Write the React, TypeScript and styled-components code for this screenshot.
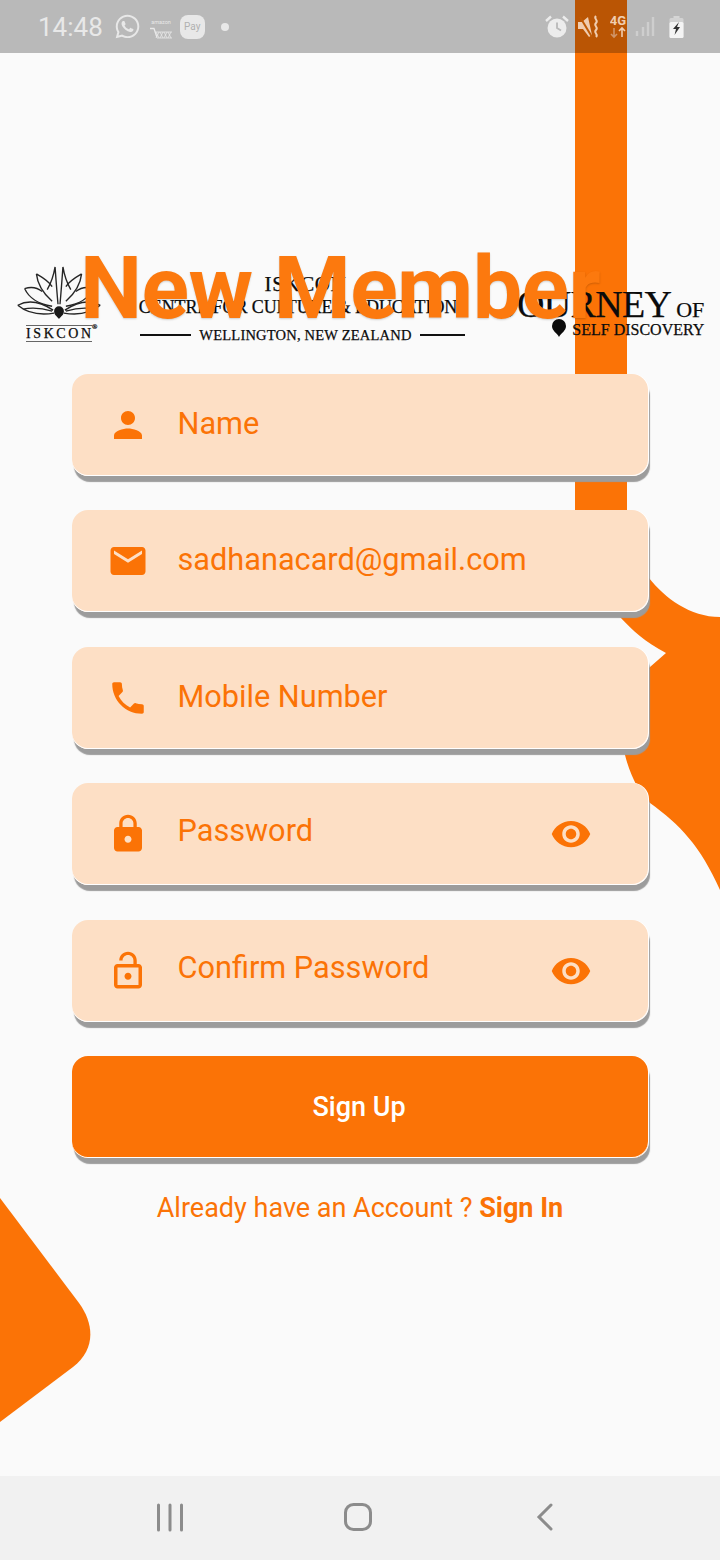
import React from 'react'
import styled, { createGlobalStyle } from 'styled-components'
import { MdEmail, MdLock, MdPerson, MdPhone, MdVisibility } from 'react-icons/md'
import { FaWhatsapp } from 'react-icons/fa'

const orange = '#fb7306'
const cardShadow = 'inset 0 -1px 0 #fff, 1px 0 0 #fff, 2px 6px 1px #9c9c9c'

const GlobalStyle = createGlobalStyle`
  html, body {
    margin: 0;
    padding: 0;
    background: #fafafa;
    font-family: Roboto, sans-serif;
  }
`

const Page = styled.div`
  position: relative;
  width: 720px;
  height: 1560px;
  overflow: hidden;
  display: flex;
  flex-direction: column;
  background: #fafafa;
`

const Decor = styled.svg`
  position: absolute;
  inset: 0;
  width: 720px;
  height: 1560px;
`

const StatusBar = styled.div`
  position: relative;
  height: 53px;
  flex: none;
  display: flex;
  align-items: center;
  justify-content: space-between;
  padding: 0 36px 0 38px;
  background: rgba(0, 0, 0, 0.26);
  color: #e8e8e8;
`

const StatusGroup = styled.div`
  display: flex;
  align-items: center;
`

const Clock = styled.span`
  font-size: 26px;
  margin-right: 11px;
`

const PayBadge = styled.span`
  width: 25px;
  height: 24px;
  margin-left: 7px;
  border-radius: 8px;
  background: #e8e8e8;
  color: #b0b0b0;
  font-size: 10px;
  display: flex;
  align-items: center;
  justify-content: center;
`

const Dot = styled.span`
  width: 8px;
  height: 8px;
  margin-left: 16px;
  border-radius: 50%;
  background: #e8e8e8;
`

const Main = styled.main`
  position: relative;
  flex: 1;
  display: flex;
  flex-direction: column;
  align-items: center;
`

const LogoRow = styled.div`
  position: relative;
  align-self: stretch;
  height: 77px;
  margin-top: 212px;
  padding-left: 14px;
  display: flex;
  color: #0b0b0b;
  font-family: 'Liberation Serif', serif;
  -webkit-text-stroke: 0.25px #0b0b0b;
`

const Title = styled.h1`
  position: absolute;
  left: 80px;
  top: -29px;
  margin: 0;
  font-family: Roboto, sans-serif;
  font-size: 88px;
  line-height: 103px;
  font-weight: 700;
  letter-spacing: -0.6px;
  color: #fc790e;
  text-shadow: 0 1px 2px rgba(0, 0, 0, 0.18);
  -webkit-text-stroke: 0;
  white-space: nowrap;
`

const LotusBlock = styled.div`
  width: 90px;
  display: flex;
  flex-direction: column;
  align-items: center;
`

const LotusName = styled.div`
  position: relative;
  width: 66px;
  margin-top: 5px;
  border-top: 1px solid #666;
  border-bottom: 1px solid #666;
  font-size: 14px;
  line-height: 15px;
  letter-spacing: 2.6px;
  text-align: center;
  white-space: nowrap;

  &::after {
    content: '®';
    position: absolute;
    left: 100%;
    top: -3px;
    font-size: 7px;
    line-height: 8px;
    letter-spacing: 0;
  }
`

const CentreBlock = styled.div`
  width: 325px;
  margin-left: 36px;
  padding-top: 8px;
  display: flex;
  flex-direction: column;
  align-items: center;
`

const CentreName = styled.div`
  padding-left: 6px;
  font-size: 21px;
  line-height: 23px;
  letter-spacing: 0.6px;
`

const CentreLine = styled.div`
  padding-right: 9px;
  font-size: 18px;
  line-height: 23px;
  letter-spacing: -0.1px;
  white-space: nowrap;
`

const CentrePlace = styled.div`
  align-self: stretch;
  margin-top: 6px;
  display: flex;
  align-items: center;
  justify-content: space-between;
  font-size: 14.5px;
  line-height: 20px;
  letter-spacing: 0.2px;
  white-space: nowrap;

  &::before,
  &::after {
    content: '';
    height: 2px;
    background: #111;
  }

  &::before {
    width: 51px;
  }

  &::after {
    width: 45px;
  }
`

const JourneyBlock = styled.div`
  margin-left: 38px;
  padding-top: 19px;
  display: flex;
  flex-direction: column;
  align-items: flex-end;
`

const JourneyLine = styled.div`
  font-size: 38px;
  line-height: 40px;
  letter-spacing: -0.7px;
  white-space: nowrap;

  small {
    margin-left: 5px;
    font-size: 22px;
    letter-spacing: 0;
  }
`

const JourneySub = styled.div`
  display: flex;
  align-items: flex-start;
  gap: 6px;
  margin-top: -9px;
  font-size: 16px;
  line-height: 18px;
  white-space: nowrap;
`

const PinMark = styled.svg`
  flex: none;
  margin-top: -2px;
`

const Form = styled.form`
  width: 576px;
  margin-top: 31.6px;
  display: flex;
  flex-direction: column;
  gap: 34.5px;
`

const Field = styled.div`
  height: 102px;
  flex: none;
  position: relative;
  display: flex;
  align-items: center;
  padding: 0 56px 0 35px;
  border-radius: 16px;
  background: #fddfc5;
  color: ${orange};
  box-shadow: ${cardShadow};

  svg {
    flex: none;
  }
`

const Label = styled.span<{ $lift: number }>`
  flex: 1;
  margin-left: 28.5px;
  padding-bottom: ${({ $lift }) => $lift}px;
  font-size: 30.7px;
  line-height: 36px;
  white-space: nowrap;
`

const SubmitButton = styled.button`
  height: 102px;
  border: 0;
  padding: 0 2px 0 0;
  border-radius: 16px;
  background: ${orange};
  color: #fff;
  font-family: Roboto, sans-serif;
  font-size: 27px;
  font-weight: 500;
  box-shadow: ${cardShadow};
`

const SignInLine = styled.p`
  margin: 31.5px 0 0;
  font-size: 27px;
  line-height: 36px;
  color: ${orange};
  text-align: center;

  strong {
    font-weight: 700;
  }
`

const NavBar = styled.nav`
  position: relative;
  height: 84px;
  flex: none;
  display: flex;
  align-items: center;
  background: #f1f1f1;
  color: #8c8c8c;
`

const NavSlot = styled.div<{ $x: number }>`
  width: 0;
  margin-left: ${({ $x }) => $x}px;
  margin-top: -2px;
  display: flex;
  justify-content: center;

  svg {
    flex: none;
  }
`

const LockOpenIcon = () => (
  <svg width="42" height="42" viewBox="0 0 24 24" fill="currentColor">
    <path d="M12 17c1.1 0 2-.9 2-2s-.9-2-2-2-2 .9-2 2 .9 2 2 2zm6-9h-1V6c0-2.76-2.24-5-5-5S7 3.24 7 6h1.9c0-1.71 1.39-3.1 3.1-3.1 1.71 0 3.1 1.39 3.1 3.1v2H6c-1.1 0-2 .9-2 2v10c0 1.1.9 2 2 2h12c1.1 0 2-.9 2-2V10c0-1.1-.9-2-2-2zm0 12H6V10h12v10z" />
  </svg>
)

const AmazonIcon = () => (
  <svg width="24" height="26" viewBox="0 0 24 26" style={{ marginLeft: 8 }}>
    <text x="12" y="10" fontSize="5.5" textAnchor="middle" fill="#e8e8e8" fontFamily="Roboto, sans-serif">
      amazon
    </text>
    <path d="M1 14.5h4l3 9" fill="none" stroke="#e8e8e8" strokeWidth="1.3" />
    <path d="M7 18l3 6M11 18l3 6M15 18l3 6M19 18l3 6M10 18l-3 6M14 18l-3 6M18 18l-3 6M22 18l-3 6M6 18h17M8 24h15" stroke="#e8e8e8" strokeWidth="0.8" />
  </svg>
)

const AlarmIcon = () => (
  <svg width="26" height="26" viewBox="0 0 26 26">
    <circle cx="13" cy="14" r="9.5" fill="#ececec" />
    <path d="M2 7l5-4.5M24 7l-5-4.5" stroke="#ececec" strokeWidth="2.4" />
    <path d="M13 8.5V14l4 2.5" fill="none" stroke="#b9b9b9" strokeWidth="1.8" />
  </svg>
)

const MuteIcon = () => (
  <svg width="24" height="26" viewBox="0 0 24 26" style={{ marginLeft: 7 }}>
    <path d="M1 8h4l6-5 4 18-3 2-6-8H1z" fill="#f0cdb0" />
    <path d="M3 3l12 20" stroke="#bf5a05" strokeWidth="2" />
    <path d="M19 2c-3 3 3 4 0 7s3 4 0 7 3 4 0 7" fill="none" stroke="#f0cdb0" strokeWidth="2" />
  </svg>
)

const NetworkIcon = () => (
  <svg width="16" height="26" viewBox="0 0 16 26" style={{ marginLeft: 9 }}>
    <text x="8" y="11" fontSize="13" fontWeight="700" textAnchor="middle" fill="#f0cdb0" fontFamily="Roboto, sans-serif">
      4G
    </text>
    <path d="M4 14v9M1 20l3 3 3-3" fill="none" stroke="#d09468" strokeWidth="1.6" />
    <path d="M12 23v-9M9 17l3-3 3 3" fill="none" stroke="#f0cdb0" strokeWidth="1.6" />
  </svg>
)

const SignalIcon = () => (
  <svg width="20" height="22" viewBox="0 0 20 22" style={{ marginLeft: 9 }}>
    <path d="M2 15v5M8 11v9M13 6v14M18 1v19" stroke="#e8e8e8" strokeOpacity="0.45" strokeWidth="2.4" />
  </svg>
)

const BatteryIcon = () => (
  <svg width="15" height="24" viewBox="0 0 15 24" style={{ marginLeft: 14 }}>
    <path d="M4.5 1h6v2h-6z" fill="#e8e8e8" fillOpacity="0.6" />
    <rect x="0.5" y="3" width="14" height="20" rx="1.5" fill="#e8e8e8" fillOpacity="0.55" />
    <rect x="0.5" y="7" width="14" height="16" rx="1.5" fill="#f4f4f4" />
    <path d="M10 7L4 14h3l-1.5 6L11 12H8z" fill="#333" />
  </svg>
)

const LotusIcon = () => {
  const halfPetals = (
    <g fill="none" stroke="#262626" strokeWidth="1.4">
      <path d="M55 268C53 280 50 286 47 291M55 268C56 282 57 295 58 306" />
      <path d="M36 275C37 285 42 294 52 303M36 275C43 279 49 283 52 288" />
      <path d="M24 290C28 299 38 306 52 308M24 290C30 288 37 289 42 293" />
      <path d="M17 307C28 301 41 304 53 312M17 307C28 316 42 317 54 315M22 311C32 309 42 310 52 313" />
    </g>
  )
  return (
    <svg width="90" height="56" viewBox="14 266 90 56">
      {halfPetals}
      <g transform="translate(118 0) scale(-1 1)">{halfPetals}</g>
      <path d="M59 321c-2-3-5-4-5-8a5 5 0 0 1 10 0c0 4-3 5-5 8z" fill="#1a1a1a" />
    </svg>
  )
}

const PinIcon = () => (
  <PinMark width="14" height="18" viewBox="0 0 14 18">
    <path d="M7 18C5 14 0 12 0 7a7 7 0 0 1 14 0c0 5-5 7-7 11z" fill="#0b0b0b" />
  </PinMark>
)

export default function App() {
  return (
    <Page>
      <GlobalStyle />
      <Decor viewBox="0 0 720 1560">
        <rect x="575" y="0" width="52" height="512" fill={orange} />
        <path
          d="M649 578C665 598 690 617 720 617V890C700 845 680 825 650 803C640 795 630 775 625 755L620 700L650 667L666 653C645 642 632 630 620 617L600 590Z"
          fill={orange}
        />
        <path d="M0 1198L79 1303C95 1325 95 1350 73 1367L0 1422Z" fill={orange} />
      </Decor>

      <StatusBar>
        <StatusGroup>
          <Clock>14:48</Clock>
          <FaWhatsapp size={27} />
          <AmazonIcon />
          <PayBadge>Pay</PayBadge>
          <Dot />
        </StatusGroup>
        <StatusGroup>
          <AlarmIcon />
          <MuteIcon />
          <NetworkIcon />
          <SignalIcon />
          <BatteryIcon />
        </StatusGroup>
      </StatusBar>

      <Main>
        <LogoRow>
          <LotusBlock>
            <LotusIcon />
            <LotusName>ISKCON</LotusName>
          </LotusBlock>
          <CentreBlock>
            <CentreName>ISKCON</CentreName>
            <CentreLine>CENTRE FOR CULTURE &amp; EDUCATION</CentreLine>
            <CentrePlace>WELLINGTON, NEW ZEALAND</CentrePlace>
          </CentreBlock>
          <JourneyBlock>
            <JourneyLine>
              JOURNEY<small>OF</small>
            </JourneyLine>
            <JourneySub>
              <PinIcon />
              SELF DISCOVERY
            </JourneySub>
          </JourneyBlock>
          <Title>New Member</Title>
        </LogoRow>

        <Form>
          <Field>
            <MdPerson size={42} />
            <Label $lift={2}>Name</Label>
          </Field>
          <Field>
            <MdEmail size={42} />
            <Label $lift={2}>sadhanacard@gmail.com</Label>
          </Field>
          <Field>
            <MdPhone size={42} />
            <Label $lift={1}>Mobile Number</Label>
          </Field>
          <Field>
            <MdLock size={42} />
            <Label $lift={6}>Password</Label>
            <MdVisibility size={42} />
          </Field>
          <Field>
            <LockOpenIcon />
            <Label $lift={6}>Confirm Password</Label>
            <MdVisibility size={42} />
          </Field>
          <SubmitButton type="button">Sign Up</SubmitButton>
        </Form>

        <SignInLine>
          Already have an Account ? <strong>Sign In</strong>
        </SignInLine>
      </Main>

      <NavBar>
        <NavSlot $x={170}>
          <svg width="28" height="30" viewBox="0 0 28 30">
            <path d="M2.5 3v25M14 3v25M25.5 3v25" stroke="currentColor" strokeWidth="3" strokeLinecap="round" />
          </svg>
        </NavSlot>
        <NavSlot $x={188}>
          <svg width="30" height="30" viewBox="0 0 30 30">
            <rect x="2.5" y="2.5" width="25" height="25" rx="8" fill="none" stroke="currentColor" strokeWidth="3" />
          </svg>
        </NavSlot>
        <NavSlot $x={187}>
          <svg width="18" height="30" viewBox="0 0 18 30">
            <path d="M15 3L3 15l12 12" fill="none" stroke="currentColor" strokeWidth="3" strokeLinecap="round" />
          </svg>
        </NavSlot>
      </NavBar>
    </Page>
  )
}
